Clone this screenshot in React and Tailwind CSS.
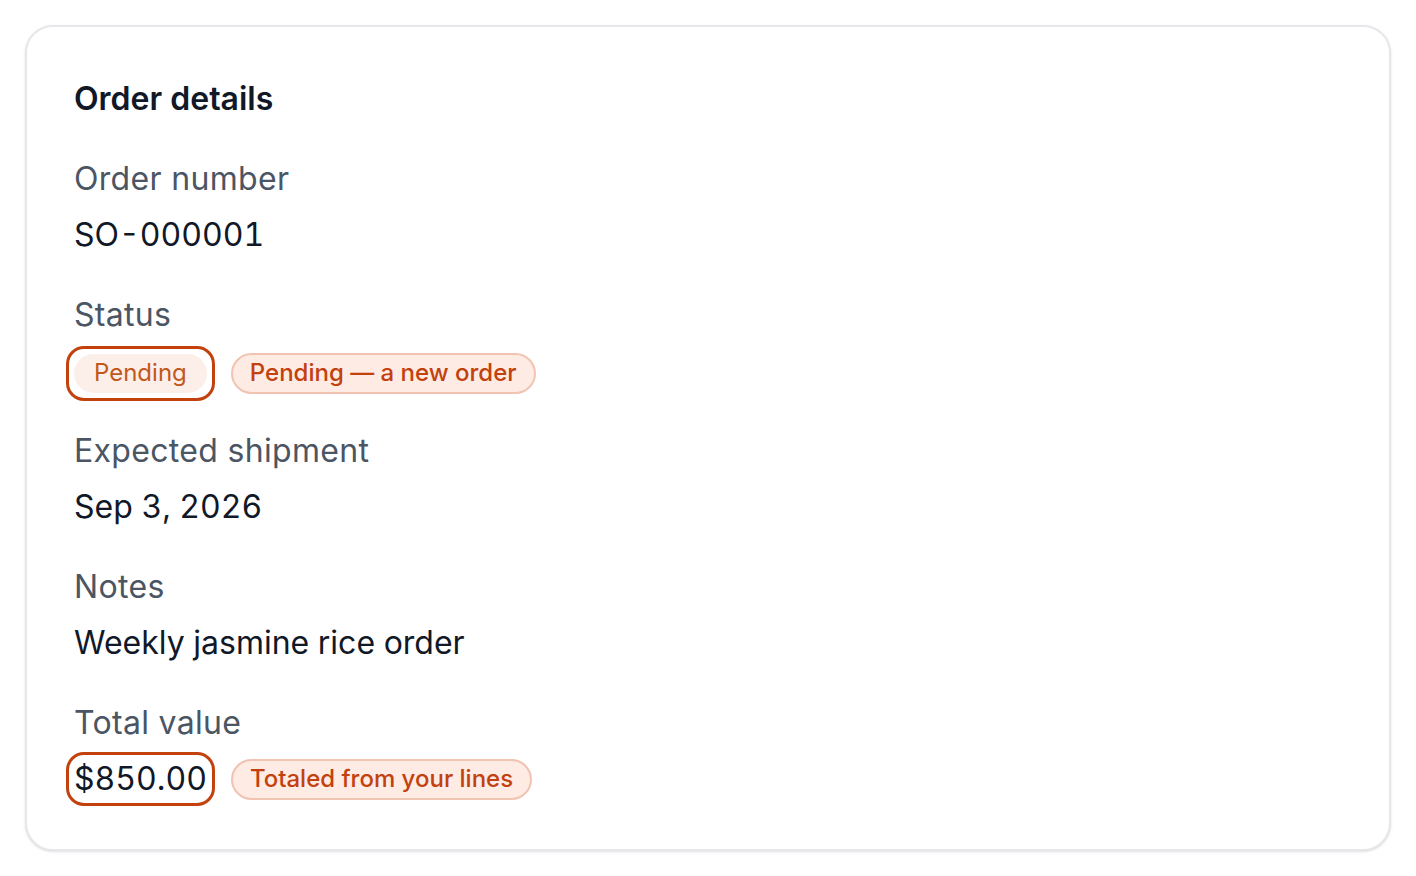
import React from "react";

const fields = [
  { label: "Order number", value: "SO-000001" },
  { label: "Status", kind: "status" },
  { label: "Expected shipment", value: "Sep 3, 2026" },
  { label: "Notes", value: "Weekly jasmine rice order" },
  { label: "Total value", kind: "total" },
];

function Badge({ children }) {
  return (
    <span className="inline-flex items-center h-[41px] px-[17px] rounded-full border-2 border-[#f1c3b2] bg-[#fdebe4] text-[24px] font-medium text-[#c2410c] leading-none">
      {children}
    </span>
  );
}

function FieldValue({ field }) {
  if (field.kind === "status") {
    return (
      <div className="flex items-center gap-6 h-10 pt-1">
        <span className="rounded-[10px] outline-[3px] outline-solid outline-[#c2410c] outline-offset-[5px]">
          <span className="inline-flex items-center h-[39px] px-5 rounded-full bg-[#fcefe9] text-[24px] text-[#c2581c] leading-none">
            Pending
          </span>
        </span>
        <Badge>Pending — a new order</Badge>
      </div>
    );
  }
  if (field.kind === "total") {
    return (
      <div className="flex items-center gap-6 h-10">
        <span className="text-[32px] leading-[38px] tabular-nums text-[#111827] rounded-[10px] outline-[3px] outline-solid outline-[#c2410c] outline-offset-[5px]">
          $850.00
        </span>
        <Badge>Totaled from your lines</Badge>
      </div>
    );
  }
  return (
    <p className="text-[32px] leading-10 tabular-nums text-[#111827]">
      {field.value}
    </p>
  );
}

export default function App() {
  return (
    <div
      className="p-[25px] bg-white min-h-screen"
      style={{ fontFamily: "Inter, 'Noto Sans', sans-serif" }}
    >
      <div className="border-2 border-[#e6e7eb] rounded-[28px] bg-white shadow-sm px-[47px] pt-[54px] pb-[50px]">
        <h2 className="text-[32px] leading-9 font-semibold text-[#111827]">
          Order details
        </h2>
        <div className="mt-[42px] flex flex-col gap-10">
          {fields.map((f) => (
            <div key={f.label} className="flex flex-col gap-4">
              <p className="text-[32px] leading-10 tracking-[0.01em] text-[#4b5563]">
                {f.label}
              </p>
              <FieldValue field={f} />
            </div>
          ))}
        </div>
      </div>
    </div>
  );
}
